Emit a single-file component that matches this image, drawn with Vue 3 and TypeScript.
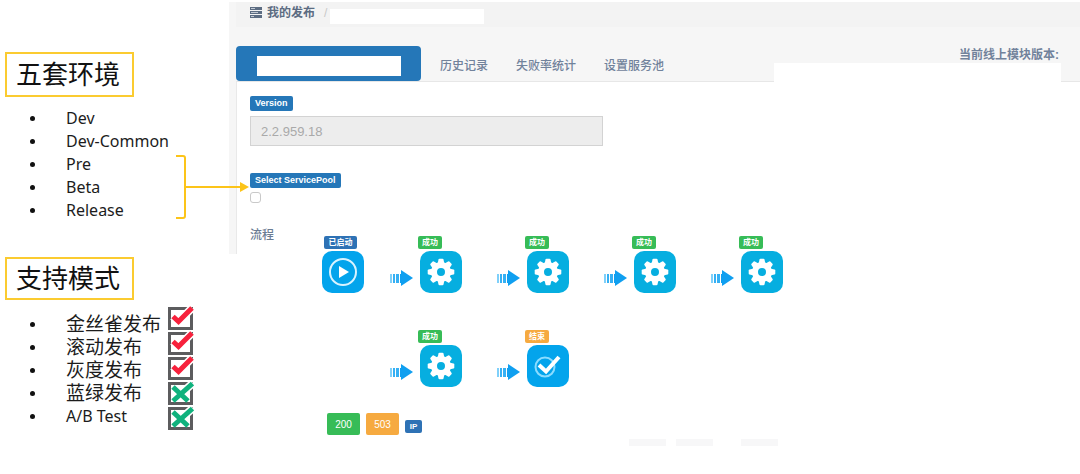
<script setup lang="ts">
interface Step {
  label: string
  tone: 'green' | 'orange'
  icon: 'gear' | 'done'
}

const environments: string[] = ['Dev', 'Dev-Common', 'Pre', 'Beta', 'Release']
const modes: string[] = ['金丝雀发布', '滚动发布', '灰度发布', '蓝绿发布', 'A/B Test']
const marks: boolean[] = [true, true, true, false, false]
const tabs: string[] = ['历史记录', '失败率统计', '设置服务池']

const gear: Step = { label: '成功', tone: 'green', icon: 'gear' }
const rows: Step[][] = [
  [gear, gear, gear, gear],
  [gear, { label: '结束', tone: 'orange', icon: 'done' }],
]
const teeth: number[] = [0, 45, 90, 135, 180, 225, 270, 315]
</script>

<template>
  <div class="page">
    <aside class="notes">
      <h2 class="note-title">五套环境</h2>
      <ul class="note-list">
        <li v-for="name in environments" :key="name">{{ name }}</li>
      </ul>
      <h2 class="note-title second">支持模式</h2>
      <div class="modes">
        <ul class="note-list">
          <li v-for="name in modes" :key="name">{{ name }}</li>
        </ul>
        <div class="marks">
          <svg v-for="(ok, i) in marks" :key="i" width="26" height="25" viewBox="0 0 26 25" fill="none" aria-hidden="true">
            <rect x="1.500" y="2.500" width="22" height="20" fill="#fff" stroke="#5c5c5e" stroke-width="3" />
            <template v-if="ok">
              <path d="M5 10.500L10.500 15.500 24 2" stroke="#fff" stroke-width="8" />
              <path d="M5 10.500L10.500 15.500 24 2" stroke="#f7213c" stroke-width="5" />
            </template>
            <template v-else>
              <path d="M16 10L25 2" stroke="#fff" stroke-width="8" />
              <path d="M5 6L20 20M5 20L24.500 2.500" stroke="#0fb27d" stroke-width="5" />
            </template>
          </svg>
        </div>
      </div>
      <svg class="bracket" width="74" height="66" viewBox="0 0 74 66" aria-hidden="true">
        <path d="M0 2h7q2 0 2 2v58q0 2-2 2h-8M10 33h56" fill="none" stroke="#fcc419" stroke-width="2" />
        <path d="M64 28l9 5-9 5z" fill="#fcc419" />
      </svg>
    </aside>

    <main class="console">
      <nav class="crumbs">
        <svg width="12" height="12" viewBox="0 0 12 12" aria-hidden="true">
          <rect y="0" width="12" height="3" fill="#5c6c82" />
          <rect y="4" width="12" height="3" fill="#5c6c82" />
          <rect y="8" width="12" height="3" fill="#5c6c82" />
          <path d="M1 1.500h4M1 5.500h7M1 9.500h3" stroke="#c3cad4" />
        </svg>
        <a href="#">我的发布</a>
        <span class="slash">/</span>
        <span class="crumb-blank"></span>
      </nav>

      <div class="tabbar">
        <button type="button" class="tab active" aria-label="当前模块"><span></span></button>
        <button v-for="tab in tabs" :key="tab" type="button" class="tab">{{ tab }}</button>
        <div class="online">当前线上模块版本:</div>
        <div class="online-blank"></div>
      </div>

      <section class="panel">
        <div class="form">
          <label class="tag" for="version">Version</label>
          <input id="version" class="version" type="text" value="2.2.959.18" disabled />
          <label class="tag pool-tag" for="pool">Select ServicePool</label>
          <input id="pool" class="pool" type="checkbox" />
        </div>

        <div class="flow">
          <div class="flow-title">流程</div>
          <div class="flow-rows">
            <div v-for="(row, r) in rows" :key="r" class="flow-row">
              <div class="start">
                <div v-if="r === 0" class="node">
                  <span class="badge blue">已启动</span>
                  <svg width="42" height="42" viewBox="0 0 42 42" aria-hidden="true">
                    <rect width="42" height="42" rx="10" fill="#03a4ec" />
                    <circle cx="21" cy="21" r="13" fill="none" stroke="#d8f3ff" stroke-width="2" />
                    <path d="M17 15l10 6-10 6z" fill="#fff" />
                  </svg>
                </div>
              </div>
              <div v-for="(step, i) in row" :key="i" class="step">
                <svg class="arrow" width="23" height="16" viewBox="0 0 23 16" aria-hidden="true">
                  <path d="M0 4h2v9H0z" fill="#7fd0fa" />
                  <path d="M3 4h2v9H3zM6 4h3v9H6z" fill="#35b0f4" />
                  <path d="M10 4h1V0l12 8-12 8v-3h-1z" fill="#0f9ff0" />
                </svg>
                <div class="node">
                  <span class="badge" :class="step.tone">{{ step.label }}</span>
                  <svg v-if="step.icon === 'gear'" width="42" height="42" viewBox="0 0 42 42" aria-hidden="true">
                    <rect width="42" height="42" rx="10" fill="#06aee0" />
                    <g fill="#fff">
                      <path
                        v-for="angle in teeth"
                        :key="angle"
                        d="M17.500 13l1-4.500q.2-.8 1-.8h3q.8 0 1 .8l1 4.500z"
                        :transform="`rotate(${angle} 21 21)`"
                      />
                    </g>
                    <circle cx="21" cy="21" r="7" fill="none" stroke="#fff" stroke-width="6" />
                  </svg>
                  <svg v-else width="42" height="42" viewBox="0 0 42 42" aria-hidden="true">
                    <rect width="42" height="42" rx="10" fill="#03a4ec" />
                    <circle cx="18" cy="22" r="9.500" fill="none" stroke="#8bdcff" stroke-width="2" />
                    <path d="M12 20l7 6.500L32 12" fill="none" stroke="#fff" stroke-width="4" />
                  </svg>
                </div>
              </div>
            </div>
            <div class="codes">
              <button type="button" class="code green">200</button>
              <button type="button" class="code orange">503</button>
              <span class="badge blue">IP</span>
            </div>
            <div class="faint"><i></i><i></i><i class="far"></i></div>
          </div>
        </div>
      </section>
    </main>
  </div>
</template>

<style>
body {
  background: #fff;
}
</style>

<style scoped>
.page {
  display: flex;
  font-family: "Liberation Sans", "Noto Sans CJK SC", sans-serif;
  overflow: hidden;
}
.notes {
  position: relative;
  z-index: 1;
  flex: 0 0 229px;
  box-sizing: border-box;
  padding: 52px 0 0 5px;
  font-family: "Noto Sans", "Noto Sans CJK SC", sans-serif;
  color: #1c1c1c;
}
.note-title {
  box-sizing: border-box;
  width: 129px;
  height: 45px;
  margin: 0;
  padding-left: 9px;
  border: 2px solid #fbcb30;
  font-size: 26px;
  font-weight: 400;
  line-height: 40px;
  color: #111;
}
.note-title.second {
  height: 43px;
  margin-top: 35px;
  line-height: 38px;
}
.note-list {
  margin: 10px 0 0;
  padding: 0;
  list-style: none;
  font-size: 16px;
  line-height: 23px;
}
.note-list li {
  display: flex;
  align-items: center;
  height: 23px;
  white-space: nowrap;
}
.note-list li::before {
  content: "";
  width: 5px;
  height: 5px;
  margin: 0 31px 0 25px;
  border-radius: 50%;
  background: #111;
}
.modes {
  display: flex;
}
.modes .note-list {
  width: 163px;
  margin-top: 13px;
  font-size: 19px;
}
.modes .note-list li:last-child {
  font-size: 16px;
}
.marks {
  display: flex;
  flex-direction: column;
  padding-top: 6px;
}
.bracket {
  position: absolute;
  left: 176px;
  top: 154px;
}
.console {
  flex: 1;
  min-width: 0;
  margin-top: 2px;
  background: linear-gradient(#f6f6f6, #f6f6f6) no-repeat 0 0 / 100% 252px;
}
.crumbs {
  display: flex;
  align-items: center;
  height: 25px;
  margin-left: 7px;
  padding: 0 0 4px 14px;
  box-sizing: border-box;
  background: #f3f3f3;
  color: #5c6c82;
}
.crumbs a {
  margin: 0 9px 0 5px;
  color: #5c6c82;
  font-size: 12px;
  font-weight: 700;
  line-height: 20px;
  text-decoration: none;
}
.slash {
  font-size: 12px;
  color: #c8c8c8;
}
.crumb-blank {
  width: 154px;
  height: 15px;
  margin: 7px 0 0 3px;
  background: #fff;
}
.tabbar {
  position: relative;
  display: flex;
  height: 35px;
  margin: 19px 0 0 7px;
  border-bottom: 1px solid #e7e7e7;
}
.tab {
  padding: 4px 0 0;
  margin-right: 28px;
  border: 0;
  background: none;
  font-family: inherit;
  font-size: 12px;
  font-weight: 500;
  line-height: 18px;
  color: #71829b;
}
.tab.active {
  width: 185px;
  height: 35px;
  margin-right: 19px;
  padding: 5px 0 0;
  border-radius: 4px;
  background: #2577b8;
}
.tab.active span {
  display: block;
  width: 144px;
  height: 20px;
  margin: 0 auto;
  background: #fff;
}
.online {
  margin-left: auto;
  padding-right: 21px;
  font-size: 12px;
  font-weight: 700;
  line-height: 18px;
  color: #71829b;
}
.online-blank {
  position: absolute;
  right: 19px;
  top: 17px;
  width: 287px;
  height: 19px;
  background: #fff;
}
.panel {
  position: relative;
  margin-left: 7px;
  padding: 14px 0 0 14px;
  background: #fff;
}
.panel::before {
  content: "";
  position: absolute;
  left: 0;
  top: 0;
  width: 1px;
  height: 172px;
  background: #e9e9e9;
}
.form {
  display: flex;
  flex-direction: column;
  align-items: flex-start;
}
.tag {
  padding: 0 5px;
  border-radius: 2px;
  background: #2577b8;
  font-size: 9px;
  font-weight: 700;
  line-height: 15px;
  color: #fff;
}
.version {
  box-sizing: border-box;
  width: 353px;
  max-width: 100%;
  height: 30px;
  margin: 5px 0 27px;
  padding: 0 10px;
  border: 1px solid #d3d3d3;
  border-radius: 0;
  background: #ededed;
  font-family: inherit;
  font-size: 13px;
  color: #a9a9a9;
}
.pool {
  appearance: none;
  width: 11px;
  height: 11px;
  margin: 4px 0 0;
  border: 1px solid #c9c9c9;
  border-radius: 3px;
  background: #fff;
}
.flow {
  display: flex;
  margin-top: 33px;
}
.flow-title {
  width: 72px;
  margin-top: -10px;
  font-size: 12px;
  font-weight: 500;
  line-height: 18px;
  color: #6b7c93;
}
.flow-rows {
  flex: 1;
}
.flow-row {
  display: flex;
  height: 57px;
  margin-bottom: 37px;
}
.start {
  width: 68px;
}
.step {
  display: flex;
  gap: 7px;
  margin-right: 35px;
}
.arrow {
  margin-top: 34px;
}
.node {
  width: 42px;
}
.node svg {
  display: block;
  margin-top: 2px;
}
.badge {
  display: block;
  width: 24px;
  border-radius: 2px;
  font-size: 8px;
  font-weight: 700;
  line-height: 13px;
  text-align: center;
  color: #fff;
}
.start .badge {
  width: 33px;
  margin-left: 2px;
}
.step .badge {
  margin-left: -2px;
}
.blue {
  background: #2e72b5;
}
.green {
  background: #37bc57;
}
.orange {
  background: #f6aa40;
}
.codes {
  display: flex;
  align-items: flex-end;
  gap: 6px;
  margin: -11px 0 0 5px;
}
.code {
  width: 33px;
  height: 22px;
  padding: 0;
  border: 0;
  border-radius: 2px;
  font-family: inherit;
  font-size: 10px;
  color: #fff;
}
.codes .badge {
  width: 17px;
  margin-bottom: 2px;
}
.faint {
  display: flex;
  gap: 10px;
  margin: 4px 0 26px 307px;
}
.faint i {
  width: 37px;
  height: 7px;
  background: #f7f7f8;
}
.faint .far {
  margin-left: 18px;
}
</style>
